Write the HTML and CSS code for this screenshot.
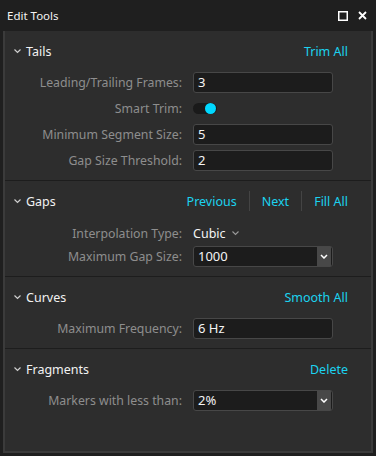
FILE: index.html
```html
<!DOCTYPE html>
<html lang="en">
<head>
    <meta charset="UTF-8">
    <title>Edit Tools</title>
    <link rel="stylesheet" href="styles.css">
</head>
<body>
    <div class="window">
        <div class="titlebar">
            <span class="title">Edit Tools</span>
            <div class="win-icons">
                <svg width="10" height="10" viewBox="0 0 10 10"><rect x="0.75" y="0.75" width="8.5" height="8.5" fill="none" stroke="#fff" stroke-width="1.5"/></svg>
                <svg width="9" height="9" viewBox="0 0 9 9"><path d="M1 1 L8 8 M8 1 L1 8" stroke="#fff" stroke-width="1.8"/></svg>
            </div>
        </div>

        <div class="panel">
            <!-- Tails -->
            <div class="group">
                <div class="group-head">
                    <span class="caret"><svg width="7" height="5" viewBox="0 0 7 5"><path d="M0.5 0.5 L3.5 3.5 L6.5 0.5" fill="none" stroke="#cfcfcf" stroke-width="1.2"/></svg></span>
                    <span class="group-title">Tails</span>
                    <div class="actions"><a class="link">Trim All</a></div>
                </div>
                <div class="rows">
                    <div class="row">
                        <label>Leading/Trailing Frames:</label>
                        <div class="field">3</div>
                    </div>
                    <div class="row">
                        <label>Smart Trim:</label>
                        <div class="toggle"><span class="knob"></span></div>
                    </div>
                    <div class="row">
                        <label>Minimum Segment Size:</label>
                        <div class="field">5</div>
                    </div>
                    <div class="row">
                        <label>Gap Size Threshold:</label>
                        <div class="field">2</div>
                    </div>
                </div>
            </div>

            <!-- Gaps -->
            <div class="group">
                <div class="group-head">
                    <span class="caret"><svg width="7" height="5" viewBox="0 0 7 5"><path d="M0.5 0.5 L3.5 3.5 L6.5 0.5" fill="none" stroke="#cfcfcf" stroke-width="1.2"/></svg></span>
                    <span class="group-title">Gaps</span>
                    <div class="actions">
                        <a class="link">Previous</a>
                        <span class="sep"></span>
                        <a class="link">Next</a>
                        <span class="sep"></span>
                        <a class="link">Fill All</a>
                    </div>
                </div>
                <div class="rows">
                    <div class="row plain">
                        <label>Interpolation Type:</label>
                        <div class="choice">Cubic <svg width="7" height="5" viewBox="0 0 7 5"><path d="M0.5 0.5 L3.5 3.5 L6.5 0.5" fill="none" stroke="#9a9a9a" stroke-width="1.1"/></svg></div>
                    </div>
                    <div class="row">
                        <label>Maximum Gap Size:</label>
                        <div class="field select">1000<span class="drop"><svg width="8" height="5" viewBox="0 0 8 5"><path d="M1 1 L4 4 L7 1" fill="none" stroke="#fff" stroke-width="1.5"/></svg></span></div>
                    </div>
                </div>
            </div>

            <!-- Curves -->
            <div class="group">
                <div class="group-head">
                    <span class="caret"><svg width="7" height="5" viewBox="0 0 7 5"><path d="M0.5 0.5 L3.5 3.5 L6.5 0.5" fill="none" stroke="#cfcfcf" stroke-width="1.2"/></svg></span>
                    <span class="group-title">Curves</span>
                    <div class="actions"><a class="link">Smooth All</a></div>
                </div>
                <div class="rows">
                    <div class="row">
                        <label>Maximum Frequency:</label>
                        <div class="field">6 Hz</div>
                    </div>
                </div>
            </div>

            <!-- Fragments -->
            <div class="group last">
                <div class="group-head">
                    <span class="caret"><svg width="7" height="5" viewBox="0 0 7 5"><path d="M0.5 0.5 L3.5 3.5 L6.5 0.5" fill="none" stroke="#cfcfcf" stroke-width="1.2"/></svg></span>
                    <span class="group-title">Fragments</span>
                    <div class="actions"><a class="link">Delete</a></div>
                </div>
                <div class="rows">
                    <div class="row">
                        <label>Markers with less than:</label>
                        <div class="field select">2%<span class="drop"><svg width="8" height="5" viewBox="0 0 8 5"><path d="M1 1 L4 4 L7 1" fill="none" stroke="#fff" stroke-width="1.5"/></svg></span></div>
                    </div>
                </div>
            </div>
        </div>
    </div>
</body>
</html>
```

FILE: styles.css
```css
* {
    box-sizing: border-box;
}

body {
    margin: 0;
    background-color: #1f1f1f;
    font-family: 'Noto Sans', sans-serif;
    font-size: 12.3px;
    color: #f0f0f0;
}

.window {
    display: flex;
    flex-direction: column;
    width: 376px;
    height: 456px;
}

.titlebar {
    height: 31px;
    display: flex;
    align-items: center;
    padding: 0 9px 0 7px;
    flex-shrink: 0;
}

.title {
    flex: 1;
    font-size: 11.5px;
    color: #f4f4f4;
}

.win-icons {
    display: flex;
    align-items: center;
    gap: 10px;
}

.panel {
    flex: 1;
    margin: 0 3px 3px;
    background-color: #2d2d2d;
    border: 2px solid #3b3b3b;
    border-top: none;
}

.group {
    padding-bottom: 9px;
    border-bottom: 1px solid #1d1d1d;
}

.group.last {
    border-bottom: none;
}

.group-head {
    display: flex;
    align-items: center;
    height: 22px;
    margin-top: 9px;
    padding: 0 23px 0 9px;
}

.caret {
    display: flex;
    width: 12px;
}

.group-title {
    flex: 1;
    font-size: 12.5px;
    color: #f2f2f2;
}

.actions {
    display: flex;
    align-items: center;
}

.link {
    color: #1bd3f0;
    font-size: 12.5px;
}

.sep {
    width: 1px;
    height: 20px;
    background-color: #444;
    margin: 0 12px;
}

.rows {
    display: flex;
    flex-direction: column;
    gap: 4px;
    padding-top: 9px;
}

.row {
    display: grid;
    grid-template-columns: 177px 140px;
    column-gap: 11px;
    align-items: center;
    height: 22px;
}

.row.plain {
    height: 20px;
    margin-top: 2px;
    margin-bottom: -2px;
}

.row label {
    text-align: right;
    color: #8e8e8e;
}

.field {
    height: 21px;
    display: flex;
    align-items: center;
    padding-left: 4px;
    background-color: #1c1c1c;
    border: 1px solid #474747;
    border-radius: 3px;
    font-size: 13px;
    color: #f4f4f4;
}

.field.select {
    padding-right: 1px;
}

.field.select .drop {
    margin-left: auto;
    width: 14px;
    height: 19px;
    display: flex;
    align-items: center;
    justify-content: center;
    background-color: #484848;
}

.choice {
    display: flex;
    align-items: center;
    gap: 6px;
    font-size: 12.5px;
    color: #f4f4f4;
}

.toggle {
    position: relative;
    width: 24px;
    height: 11px;
    border-radius: 6px;
    background-color: #1a1a1a;
}

.knob {
    position: absolute;
    right: 1px;
    top: 0;
    width: 11px;
    height: 11px;
    border-radius: 50%;
    background-color: #00d8ff;
}
```
